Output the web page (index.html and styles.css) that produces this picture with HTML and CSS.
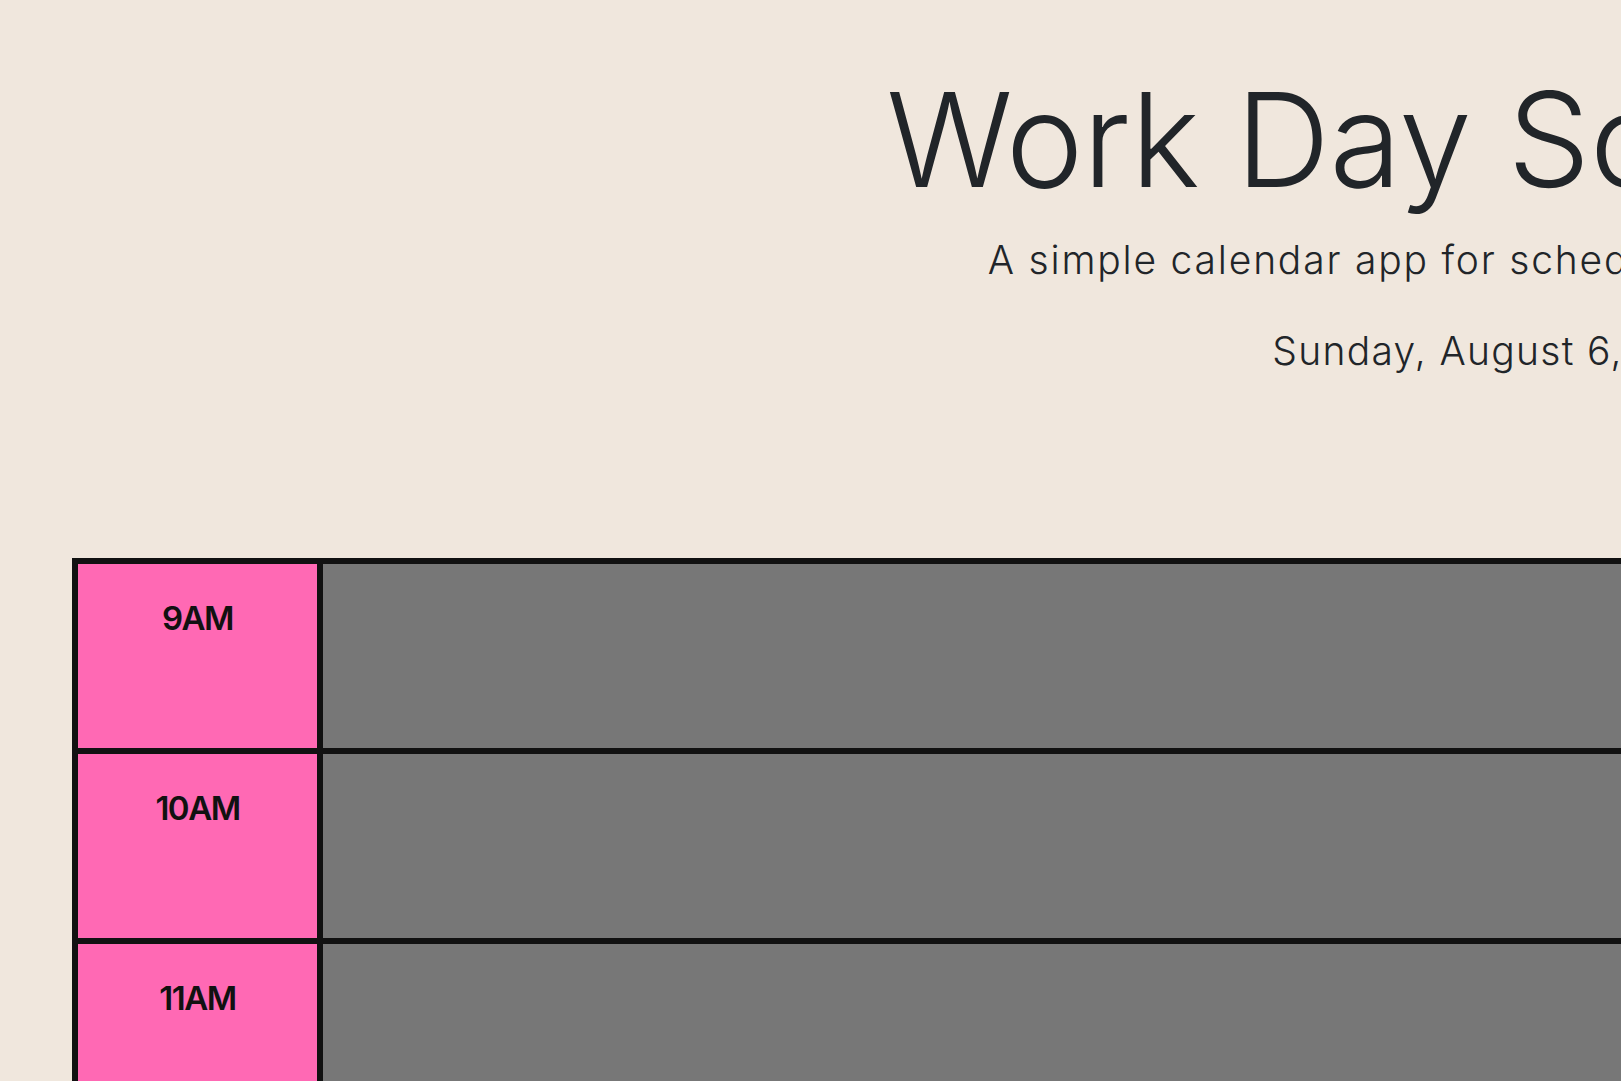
FILE: index.html
```html
<!DOCTYPE html>
<html lang="en">
<head>
<meta charset="utf-8">
<title>Work Day Scheduler</title>
<link rel="stylesheet" href="styles.css">
</head>
<body>
<div class="page">
  <header class="jumbotron">
    <h1 class="title">Work Day Scheduler</h1>
    <p class="lead">A simple calendar app for scheduling your work day</p>
    <p class="lead date">Sunday, August 6, 2023</p>
  </header>
  <main class="schedule">
    <div class="row">
      <div class="hour">9AM</div>
      <textarea class="description"></textarea>
    </div>
    <div class="row">
      <div class="hour">10AM</div>
      <textarea class="description"></textarea>
    </div>
    <div class="row">
      <div class="hour">11AM</div>
      <textarea class="description"></textarea>
    </div>
    <div class="row">
      <div class="hour">12PM</div>
      <textarea class="description"></textarea>
    </div>
  </main>
</div>
</body>
</html>
```
FILE: styles.css
```css
html, body {
  margin: 0;
  padding: 0;
  overflow: hidden;
  background: #f0e7dd;
}
.page {
  width: 3008px;
  font-family: Inter, "Noto Sans", sans-serif;
  color: #212529;
}
.jumbotron {
  text-align: center;
  padding-top: 74px;
}
.title {
  margin: 0;
  font-size: 131px;
  font-weight: 300;
  line-height: 1;
  letter-spacing: -0.5px;
}
.lead {
  margin: 26px 0 0;
  font-size: 39px;
  font-weight: 300;
  line-height: 1.5;
  letter-spacing: 1.8px;
}
.lead.date {
  margin-top: 32px;
  letter-spacing: 1.3px;
}
.schedule {
  margin: 178px 72px 0;
  border: 3px solid #111;
}
.row {
  display: flex;
  height: 190px;
}
.hour {
  flex: 0 0 245px;
  box-sizing: border-box;
  border: 3px solid #111;
  background: #ff69b4;
  text-align: center;
  font-size: 33px;
  font-weight: 600;
  line-height: 1.5;
  letter-spacing: -1.5px;
  padding-top: 30px;
  color: #111;
}
.description {
  flex: 1;
  box-sizing: border-box;
  border: 3px solid #111;
  background: #777;
  resize: none;
  margin: 0;
  height: 190px;
}
```
